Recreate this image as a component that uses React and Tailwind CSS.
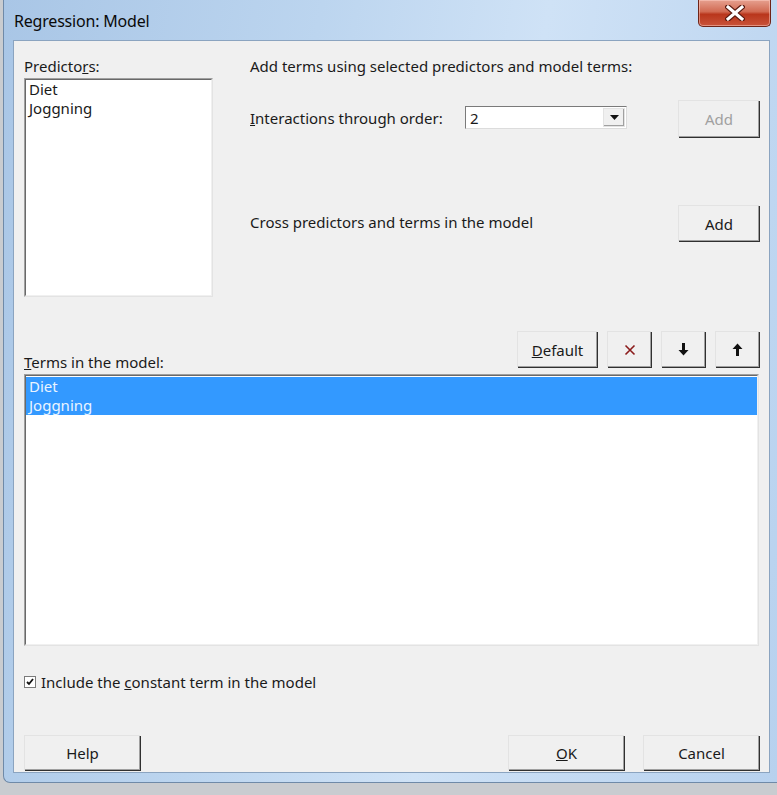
const font = { fontFamily: '"Noto Sans", "Open Sans", sans-serif' };

const Btn = ({ children, className = '', disabled = false }) => (
  <div
    className={`flex items-center justify-center bg-[#f0f0f0] border-t border-l border-t-[#e3e3e3] border-l-[#e3e3e3] shadow-[inset_-1px_-1px_0_#a0a0a0,1px_1px_0_#303030] text-[15px] leading-[18px] ${
      disabled ? 'text-[#a0a0a0]' : 'text-[#1a1a1a]'
    } ${className}`}
  >
    {children}
  </div>
);

const Sunken = ({ children, className = '' }) => (
  <div className={`border border-t-[#a0a0a0] border-l-[#a0a0a0] border-r-[#e3e3e3] border-b-[#e3e3e3] ${className}`}>
    <div className="h-full border border-t-[#696969] border-l-[#696969] border-r-[#f0f0f0] border-b-[#f0f0f0] bg-white">
      {children}
    </div>
  </div>
);

const DownArrow = () => (
  <svg width="11" height="13" viewBox="0 0 11 13">
    <path d="M4 0h3v7h3.5L5.5 12.5 0.5 7H4z" fill="#111" />
  </svg>
);

const UpArrow = () => (
  <svg width="11" height="13" viewBox="0 0 11 13">
    <path d="M4 13h3V6h3.5L5.5 0.5 0.5 6H4z" fill="#111" />
  </svg>
);

export default function App() {
  return (
    <div className="w-[777px] h-[795px] bg-[#c9ccd0] overflow-hidden" style={font}>
      <div className="ml-[3px] h-[783px] flex flex-col rounded-bl-[7px] border-l border-b border-[#6f8aa8] bg-[linear-gradient(100deg,#a9c6e6_0%,#bcd5ef_35%,#cfe2f6_60%,#b7d1ee_100%)]">
        {/* title bar */}
        <div className="h-[40px] flex items-start">
          <div className="ml-[10px] mt-[9px] text-[16px] text-[#0a0a0a] tracking-[-0.2px]">Regression: Model</div>
          <div className="ml-auto mr-[6px] w-[73px] h-[27px] rounded-b-[5px] border border-t-0 border-[#6e2418] bg-[linear-gradient(#e6a08f_0%,#d16a52_45%,#b9361c_55%,#c9533a_100%)] flex items-center justify-center shadow-[inset_0_0_0_1px_rgba(255,210,200,0.5)]">
            <svg width="20" height="16" viewBox="0 0 20 16">
              <path d="M3 2l14 12M17 2L3 14" stroke="#5a1a10" strokeWidth="5.5" strokeLinecap="square" />
              <path d="M3 2l14 12M17 2L3 14" stroke="#fff" strokeWidth="3" strokeLinecap="square" />
            </svg>
          </div>
        </div>

        {/* client area */}
        <div className="ml-[9px] mr-[7px] h-[733px] bg-[#f0f0f0] border border-[#8ba4c0] px-[10px] flex flex-col text-[15px] text-[#1a1a1a]">
          {/* top section */}
          <div className="flex">
            <div className="w-[189px] shrink-0">
              <div className="mt-[16px] h-[18px] leading-[18px]">
                Predicto<span className="underline">r</span>s:
              </div>
              <Sunken className="mt-[3px] h-[219px]">
                <div className="pl-[3px] leading-[19px]">
                  <div>Diet</div>
                  <div>Joggning</div>
                </div>
              </Sunken>
            </div>

            <div className="ml-[37px] flex-1 flex flex-col">
              <div className="mt-[16px] h-[18px] leading-[18px]">Add terms using selected predictors and model terms:</div>
              <div className="mt-[25px] h-[37px] flex items-center">
                <div className="w-[215px] leading-[18px] -mt-[2px]">
                  <span className="underline">I</span>nteractions through order:
                </div>
                <div className="w-[162px] h-[23px] -mt-[2px] flex items-center border border-t-[#7a7a7a] border-l-[#7a7a7a] border-r-[#dcdcdc] border-b-[#dcdcdc] bg-white">
                  <div className="flex-1 pl-[4px] leading-[18px]">2</div>
                  <div className="w-[22px] h-[19px] mr-[1px] bg-[#f0f0f0] flex items-center justify-center border border-[#e3e3e3] shadow-[inset_-1px_-1px_0_#a0a0a0]">
                    <svg width="9" height="5" viewBox="0 0 9 5">
                      <path d="M0 0h9L4.5 5z" fill="#111" />
                    </svg>
                  </div>
                </div>
                <Btn disabled className="ml-auto w-[81px] h-[37px]">Add</Btn>
              </div>
              <div className="mt-[68px] h-[36px] flex items-center">
                <div className="leading-[18px] -mt-[3px]">Cross predictors and terms in the model</div>
                <Btn className="ml-auto w-[81px] h-[36px]">Add</Btn>
              </div>
            </div>
          </div>

          {/* terms header row */}
          <div className="mt-[35px] h-[41px] flex">
            <div className="self-end h-[18px] leading-[18px] -translate-y-[2px]">
              <span className="underline">T</span>erms in the model:
            </div>
            <div className="ml-auto flex gap-[10px] self-start -translate-y-[1px]">
              <Btn className="w-[80px] h-[36px]">
                <span className="underline">D</span>efault
              </Btn>
              <Btn className="w-[44px] h-[36px]">
                <svg width="12" height="12" viewBox="0 0 12 12">
                  <path d="M1.5 1.5l9 9M10.5 1.5l-9 9" stroke="#8b1c1c" strokeWidth="1.6" />
                </svg>
              </Btn>
              <Btn className="w-[44px] h-[36px]">
                <DownArrow />
              </Btn>
              <Btn className="w-[44px] h-[36px]">
                <UpArrow />
              </Btn>
            </div>
          </div>

          <Sunken className="mt-[1px] h-[272px]">
            <div className="pt-[1px] leading-[19px]">
              <div className="bg-[#3399ff] text-[#eaf4ff] pl-[3px]">Diet</div>
              <div className="bg-[#3399ff] text-[#eaf4ff] pl-[3px]">Joggning</div>
            </div>
          </Sunken>

          {/* checkbox */}
          <div className="mt-[27px] h-[18px] flex items-center">
            <div className="w-[12px] h-[12px] border border-[#7a7a7a] bg-white flex items-center justify-center">
              <svg width="8" height="8" viewBox="0 0 8 8">
                <path d="M1 4l2 2 4-5" stroke="#111" strokeWidth="1.8" fill="none" />
              </svg>
            </div>
            <div className="ml-[5px] leading-[18px]">
              Include the <span className="underline">c</span>onstant term in the model
            </div>
          </div>

          {/* bottom buttons */}
          <div className="mt-[44px] flex">
            <Btn className="w-[116px] h-[35px]">Help</Btn>
            <Btn className="ml-auto w-[116px] h-[35px]">
              <span className="underline">O</span>K
            </Btn>
            <Btn className="ml-[19px] w-[116px] h-[35px]">Cancel</Btn>
          </div>
        </div>
      </div>
    </div>
  );
}
